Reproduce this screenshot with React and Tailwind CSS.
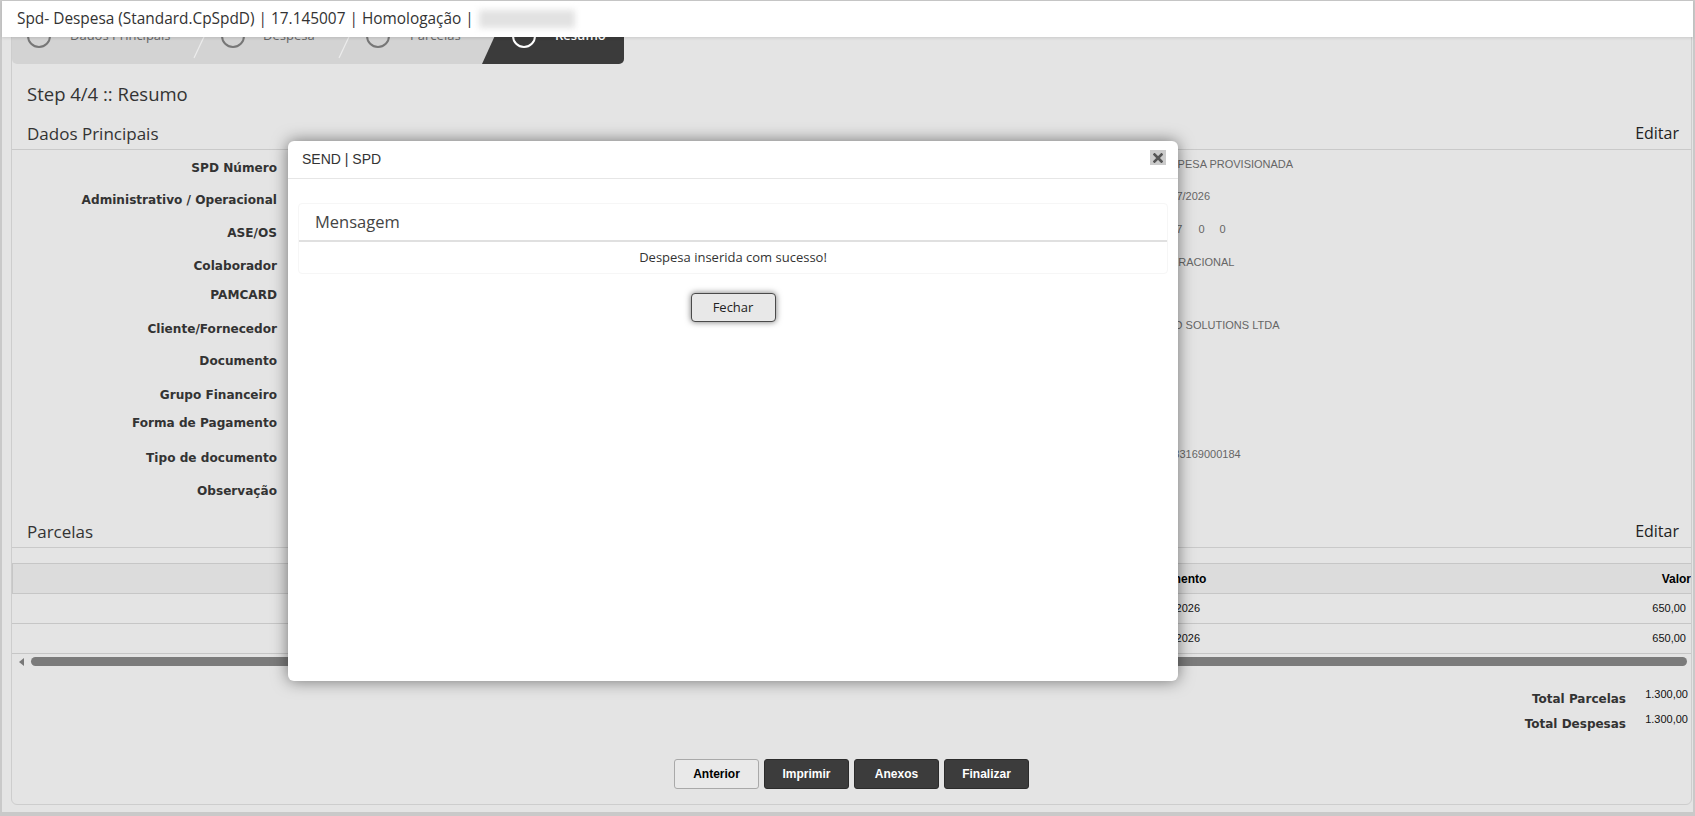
import React from "react";

const fields = [
  { label: "SPD Número", value: "DESPESA PROVISIONADA", h: "h-[32px]" },
  { label: "Administrativo / Operacional", value: "17/07/2026", h: "h-[33px]" },
  { label: "ASE/OS", value: "ase", h: "h-[33px]" },
  { label: "Colaborador", value: "OPERACIONAL", h: "h-[29px]" },
  { label: "PAMCARD", value: "", h: "h-[34px]" },
  { label: "Cliente/Fornecedor", value: "GRID SOLUTIONS LTDA", h: "h-[32px]" },
  { label: "Documento", value: "", h: "h-[34px]" },
  { label: "Grupo Financeiro", value: "", h: "h-[28px]" },
  { label: "Forma de Pagamento", value: "", h: "h-[35px]" },
  { label: "Tipo de documento", value: "05083169000184", h: "h-[33px]" },
  { label: "Observação", value: "", h: "h-[32px]" },
];

const parcelas = [
  { venc: "17/07/2026", valor: "650,00" },
  { venc: "17/08/2026", valor: "650,00" },
];

function StepCircle({ dark }) {
  return (
    <span
      className={
        dark
          ? "w-[24px] h-[24px] rounded-full border-2 border-white shrink-0"
          : "w-[24px] h-[24px] rounded-full border-2 border-[#777] shrink-0"
      }
    />
  );
}

function Steps() {
  return (
    <div className="relative flex h-[57px] w-[612px] bg-[#d3d3d3] rounded-b-[5px] overflow-hidden font-['Open_Sans',sans-serif] text-[13px]">
      <div className="w-[187px] flex items-center gap-[19px] pl-[15px] text-[#666]">
        <StepCircle />
        <span>Dados Principais</span>
      </div>
      <div className="w-[145px] flex items-center gap-[18px] pl-[22px] text-[#666]">
        <StepCircle />
        <span>Despesa</span>
      </div>
      <div className="w-[138px] flex items-center gap-[20px] pl-[22px] text-[#666]">
        <StepCircle />
        <span>Parcelas</span>
      </div>
      <div className="w-[142px] flex items-center gap-[19px] pl-[30px] text-white font-semibold bg-[#3b3b3b] [clip-path:polygon(26px_0,100%_0,100%_100%,0_100%)]">
        <StepCircle dark />
        <span>Resumo</span>
      </div>
      <svg className="absolute inset-0 pointer-events-none" width="612" height="57">
        <line x1="206" y1="0" x2="182" y2="51" stroke="#ececec" strokeWidth="1.2" />
        <line x1="351" y1="0" x2="327" y2="51" stroke="#ececec" strokeWidth="1.2" />
      </svg>
    </div>
  );
}

function SectionHeading({ title, className }) {
  return (
    <div
      className={
        "h-[31px] flex items-center justify-between border-b border-[#c9c9c9] pl-[15px] pr-[12px] font-['Open_Sans',sans-serif] text-[#333] " +
        className
      }
    >
      <span className="text-[17px]">{title}</span>
      <span className="text-[16px] text-[#222] -mt-[3px]">Editar</span>
    </div>
  );
}

function FieldValue({ value }) {
  if (value === "ase") {
    return (
      <span>
        <span className="ml-[3px]">3457</span>
        <span className="ml-[16px]">0</span>
        <span className="ml-[15px]">0</span>
      </span>
    );
  }
  return <span>{value}</span>;
}

function Modal() {
  return (
    <div className="absolute left-[288px] top-[141px] w-[890px] h-[540px] bg-white rounded-[6px] shadow-[0_0_16px_rgba(0,0,0,0.5)] flex flex-col">
      <div className="h-[38px] shrink-0 border-b border-[#e6e6e6] flex items-center justify-between pl-[14px] pr-[12px]">
        <span className="font-['Liberation_Sans',Arial,sans-serif] text-[14px] text-[#333]">SEND | SPD</span>
        <button className="w-[16px] h-[15px] bg-[#cbcbcb] flex items-center justify-center -mt-[4px]">
          <svg width="10" height="10" viewBox="0 0 10 10">
            <path d="M1.5 1.5 L8.5 8.5 M8.5 1.5 L1.5 8.5" stroke="#555" strokeWidth="2.6" strokeLinecap="square" />
          </svg>
        </button>
      </div>
      <div className="px-[10px] pt-[24px]">
        <div className="rounded-[4px] border border-[#f6f6f6] font-['Open_Sans',sans-serif]">
          <div className="h-[38px] border-b-2 border-[#e0e0e0] flex items-center pl-[16px] text-[16.5px] text-[#444]">
            Mensagem
          </div>
          <div className="h-[31px] flex items-center justify-center text-[13px] text-[#333]">
            Despesa inserida com sucesso!
          </div>
        </div>
        <div className="flex justify-center mt-[19px]">
          <button className="w-[85px] h-[29px] rounded-[4px] border border-[#4a4a4a] bg-[#e8e8e8] shadow-[0_0_6px_rgba(0,0,0,0.55)] font-['Open_Sans',sans-serif] text-[13px] text-[#222]">
            Fechar
          </button>
        </div>
      </div>
    </div>
  );
}

export default function App() {
  return (
    <div className="relative w-[1695px] h-[816px] overflow-hidden bg-[#c9c9c9]">
      <header className="relative z-10 ml-[2px] mr-[2px] mt-[1px] h-[36px] bg-white shadow-[0_1px_3px_rgba(0,0,0,0.12)] flex items-center pl-[15px] font-['Open_Sans',sans-serif] text-[15.4px] text-[#333]">
        <span>Spd- Despesa (Standard.CpSpdD) | 17.145007 | Homologação |</span>
        <span className="ml-[5px] w-[96px] h-[18px] bg-[#e2e2e2] blur-[3px]" />
      </header>

      <div className="-mt-[31px] mx-[2px] h-[806px] bg-[#e4e4e4] pl-[9px] pr-[1px] pb-[7px]">
        <div className="h-full border border-[#cdcdcd] rounded-b-[6px] flex flex-col">
          <Steps />

          <div className="mt-[17px] pl-[15px] h-[26px] leading-[26px] text-[18.5px] text-[#333] font-['Open_Sans',sans-serif]">
            Step 4/4 :: Resumo
          </div>

          <SectionHeading title="Dados Principais" className="mt-[12px]" />

          <div className="pt-[7px]">
            {fields.map((f) => (
              <div key={f.label} className={"flex items-start " + f.h}>
                <div className="w-[265px] shrink-0 text-right pt-[3px] leading-[16px] font-['DejaVu_Sans',Verdana,sans-serif] font-bold text-[12.1px] text-[#333]">
                  {f.label}
                </div>
                <div className="ml-[878px] leading-[14px] font-['Liberation_Sans',Arial,sans-serif] text-[11px] text-[#666] whitespace-pre">
                  <FieldValue value={f.value} />
                </div>
              </div>
            ))}
          </div>

          <SectionHeading title="Parcelas" className="mt-[5px]" />

          <div className="mt-[15px] overflow-hidden font-['Liberation_Sans',Arial,sans-serif]">
            <div className="flex h-[31px] items-center bg-[#dcdcdc] border-t border-b border-l border-[#c6c6c6] text-[12px] font-bold text-black">
              <div className="w-[1122px] shrink-0" />
              <div className="flex-1 pl-[4px]">Vencimento</div>
              <div className="w-[200px] text-right">Valor</div>
            </div>
            {parcelas.map((p) => (
              <div key={p.venc} className="flex h-[30px] items-center border-b border-[#c6c6c6] text-[11px] text-[#111]">
                <div className="w-[1123px] shrink-0" />
                <div className="flex-1 pl-[10px]">{p.venc}</div>
                <div className="w-[200px] text-right pr-[5px]">{p.valor}</div>
              </div>
            ))}
            <div className="h-[15px] flex items-center pl-[7px] pr-[4px] gap-[7px]">
              <svg width="5" height="8" viewBox="0 0 5 8">
                <path d="M5 0 L0 4 L5 8 Z" fill="#777" />
              </svg>
              <div className="flex-1 h-[9px] rounded-full bg-[#7b7b7b]" />
            </div>
          </div>

          <div className="mt-[17px] flex flex-col items-end pr-[3px]">
            {[
              ["Total Parcelas", "1.300,00"],
              ["Total Despesas", "1.300,00"],
            ].map(([l, v]) => (
              <div key={l} className="flex h-[25px] items-start">
                <span className="pt-[5px] leading-[16px] font-['DejaVu_Sans',Verdana,sans-serif] font-bold text-[12px] text-[#333]">
                  {l}
                </span>
                <span className="w-[62px] text-right pt-[1px] leading-[14px] font-['Liberation_Sans',Arial,sans-serif] text-[11px] text-[#111]">
                  {v}
                </span>
              </div>
            ))}
          </div>

          <div className="mt-[23px] flex justify-center gap-[5px] font-['Liberation_Sans',Arial,sans-serif] text-[12px] font-bold">
            <button className="w-[85px] h-[30px] rounded-[3px] border border-[#a9a9a9] bg-[#e9e9e9] text-black">Anterior</button>
            <button className="w-[85px] h-[30px] rounded-[3px] border border-[#2b2b2b] bg-[#3c3c3c] text-white">Imprimir</button>
            <button className="w-[85px] h-[30px] rounded-[3px] border border-[#2b2b2b] bg-[#3c3c3c] text-white">Anexos</button>
            <button className="w-[85px] h-[30px] rounded-[3px] border border-[#2b2b2b] bg-[#3c3c3c] text-white">Finalizar</button>
          </div>
        </div>
      </div>

      <Modal />
    </div>
  );
}
